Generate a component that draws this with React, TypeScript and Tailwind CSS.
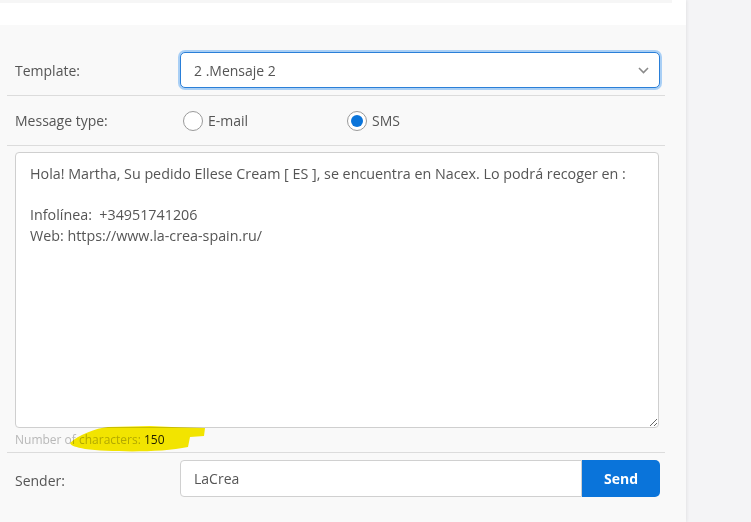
import React from "react";

const font = { fontFamily: '"Open Sans", "Noto Sans", sans-serif' };

function Radio({ checked }: { checked?: boolean }) {
  return (
    <span className="flex h-[20px] w-[20px] items-center justify-center rounded-full border border-[#9a9a9a] bg-white">
      {checked && <span className="h-[12px] w-[12px] rounded-full bg-[#0a74da]" />}
    </span>
  );
}

export default function App() {
  const msg =
    "Hola! Martha, Su pedido Ellese Cream [ ES ], se encuentra en Nacex. Lo podrá recoger en :\n\nInfolínea:  +34951741206\nWeb: https://www.la-crea-spain.ru/";
  return (
    <div className="flex h-[522px] w-[751px] overflow-hidden bg-[#f4f4f6]" style={font}>
      <div className="flex w-[686px] flex-col bg-white shadow-[1px_0_3px_rgba(0,0,0,0.07)]">
        <div className="h-[25px] shrink-0 bg-white">
          <div className="h-[3px] w-[672px] bg-[#f6f6f6]" />
        </div>
        <div className="relative flex-1 bg-[#f9f9f9] pl-[7px] pr-[21px] text-[14px] text-[#555]">
          {/* Template row */}
          <div className="flex items-center border-b border-[#dcdcdc] pb-[7px] pl-[8px] pr-[5px] pt-[27px]">
            <span className="w-[165px]">Template:</span>
            <div className="flex h-[36px] flex-1 items-center justify-between rounded-[5px] border border-[#2a7fd8] bg-white pl-[13px] pr-[9px] shadow-[0_0_0_2px_#a9cff5]">
              <span>2 .Mensaje 2</span>
              <svg width="11" height="7" viewBox="0 0 11 7" className="mr-[1px]">
                <path d="M1 1 L5.5 5.5 L10 1" fill="none" stroke="#8a8a8a" strokeWidth="1.6" />
              </svg>
            </div>
          </div>
          {/* Message type */}
          <div className="flex h-[50px] items-center border-b border-[#dcdcdc] pl-[8px]">
            <span className="w-[168px]">Message type:</span>
            <div className="flex w-[164px] items-center gap-[5px]">
              <Radio />
              <span>E-mail</span>
            </div>
            <div className="flex items-center gap-[5px]">
              <Radio checked />
              <span>SMS</span>
            </div>
          </div>
          {/* Textarea */}
          <div className="pl-[8px] pr-[6px] pt-[6px]">
            <textarea
              readOnly
              value={msg}
              className="block h-[276px] w-full resize rounded-[4px] border border-[#cfcfcf] bg-white px-[14px] pt-[11px] text-[14.3px] leading-[20.5px] text-[#555] outline-none"
              style={font}
            />
            <div className="flex h-[24px] items-center text-[12px] text-[#b8b8b8]">
              Number of characters:&nbsp;<span className="text-[#222]">150</span>
            </div>
          </div>
          {/* Yellow highlight */}
          <svg
            className="pointer-events-none absolute left-0 top-0 mix-blend-multiply"
            width="686"
            height="497"
            viewBox="0 0 686 497"
          >
            <path
              d="M70,418 C78,410 96,403 108,402 L150,401 L172,402 L205,403 L204,411 L190,412 L188,422 C160,428 110,427 85,424 C76,422 71,421 70,418 Z"
              fill="#f8ea00"
            />
          </svg>
          {/* Sender */}
          <div className="flex items-center border-t border-[#dcdcdc] pl-[8px] pr-[5px] pt-[7px]">
            <span className="w-[165px] pt-[3px]">Sender:</span>
            <div className="flex h-[37px] flex-1">
              <div className="flex flex-1 items-center rounded-l-[4px] border border-[#d0d0d0] bg-white pl-[13px]">
                LaCrea
              </div>
              <div className="flex w-[78px] items-center justify-center rounded-r-[5px] bg-[#0a74da] font-bold text-white">
                Send
              </div>
            </div>
          </div>
        </div>
      </div>
      <div className="flex-1" />
    </div>
  );
}
